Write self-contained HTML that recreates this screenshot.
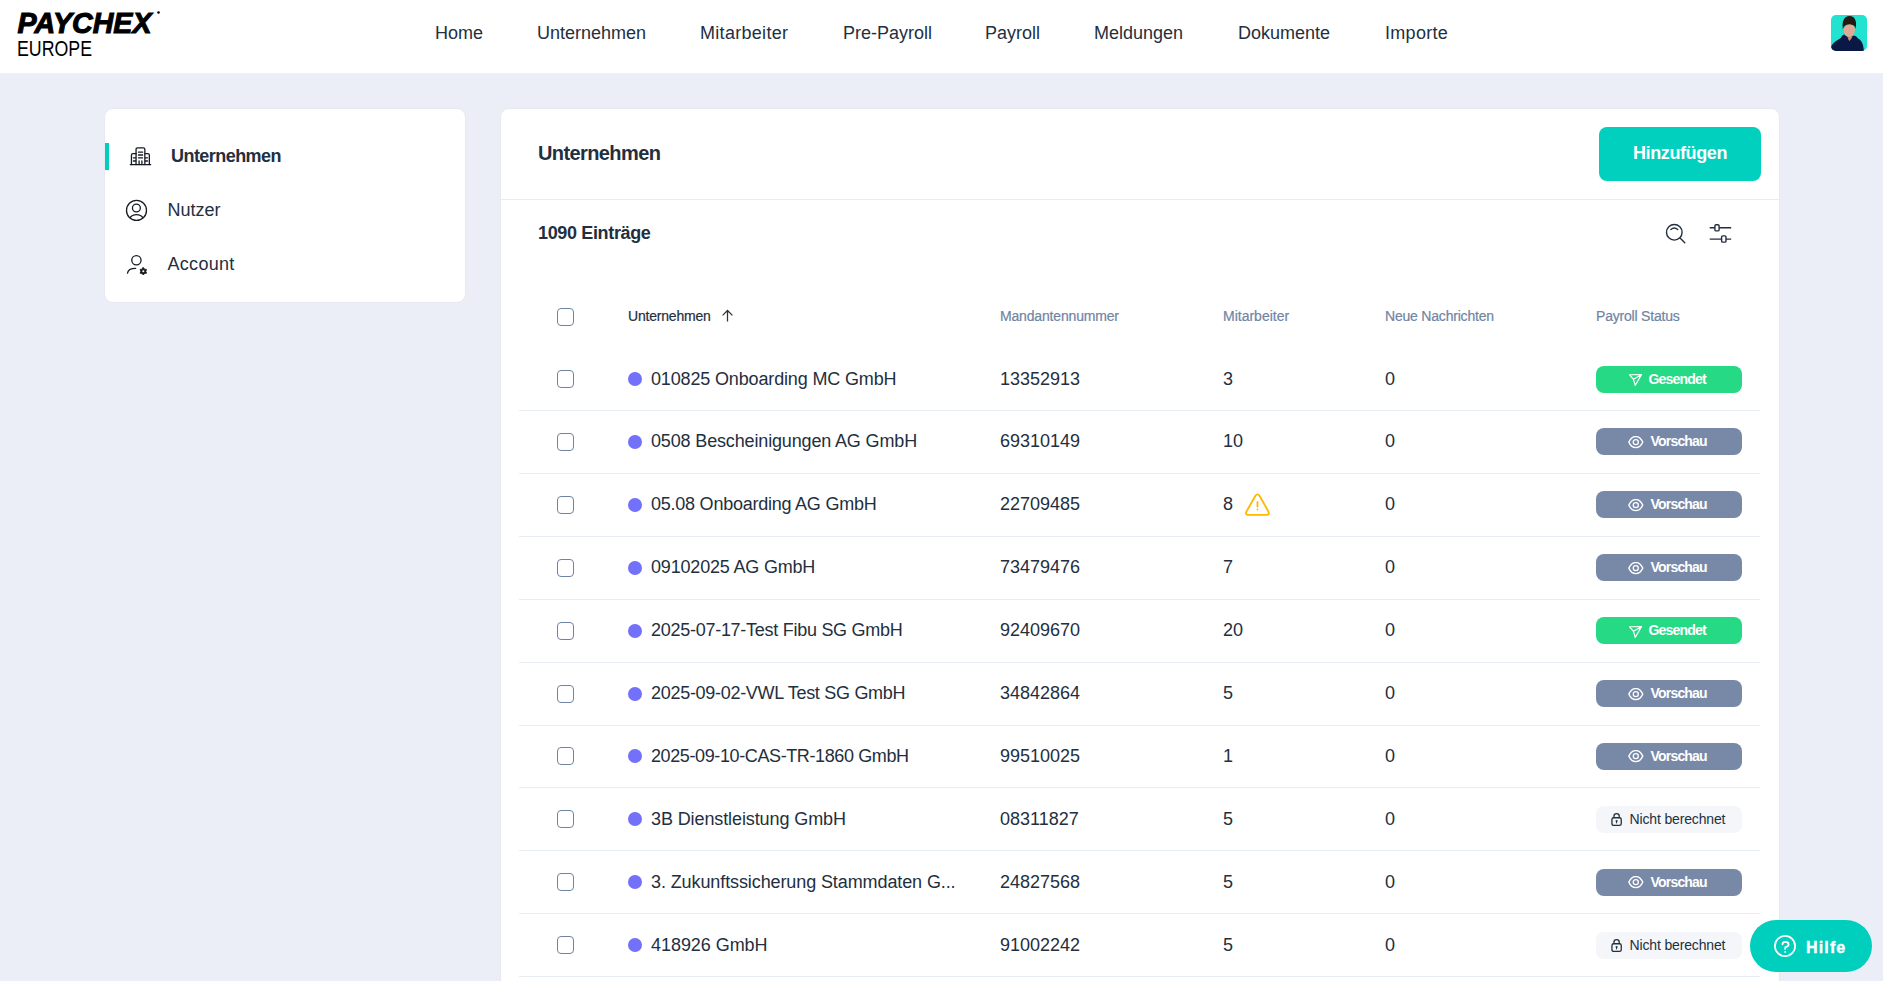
<!DOCTYPE html>
<html><head><meta charset="utf-8">
<style>
*{box-sizing:border-box;margin:0;padding:0}
html,body{width:1883px;height:981px;overflow:hidden}
body{background:#ebeef6;font-family:"Liberation Sans",sans-serif;color:#232f3e;position:relative}
.a{position:absolute;white-space:nowrap}
#hdr{position:absolute;left:0;top:0;width:1883px;height:73px;background:#fff}
.nav{position:absolute;top:23px;height:21px;line-height:21px;font-size:18px;color:#232f3e}
#side{position:absolute;left:104px;top:108px;width:362px;height:195px;background:#fff;border-radius:9px;border:1px solid #e6e9f0}
#main{position:absolute;left:500px;top:108px;width:1280px;height:900px;background:#fff;border-radius:9px;border:1px solid #e6e9f0}
.t18{font-size:18px;line-height:21px;height:21px}
.th{position:absolute;top:306px;font-size:14px;line-height:20px;color:#7084a3;-webkit-text-stroke:0.2px currentColor}
.cb{position:absolute;left:557px;width:17px;height:18px;border:1.5px solid #6f83a3;border-radius:4px;background:#fff}
.dot{position:absolute;left:628px;width:14px;height:14px;border-radius:50%;background:#7370fa}
.cell{position:absolute;font-size:18px;line-height:21px;height:21px;color:#232f3e;white-space:nowrap}
.div{position:absolute;left:519px;width:1241px;height:1px;background:#e8ecf3}
.badge{position:absolute;left:1596px;width:146px;height:27px;border-radius:8px;font-size:14px;line-height:27.5px;color:#fff;font-weight:bold;white-space:nowrap}
.g{background:#25d985}
.v{background:#7889a8}
.n{background:#f4f6fa;color:#232f3e;font-weight:normal}
</style></head><body>
<div id="hdr"></div>
<!-- logo -->
<svg class="a" style="left:0;top:0" width="200" height="73" viewBox="0 0 200 73">
  <text x="17.5" y="33.2" font-family="Liberation Sans" font-weight="bold" font-style="italic" font-size="30" textLength="134" lengthAdjust="spacingAndGlyphs" fill="#000" stroke="#000" stroke-width="1.1">PAYCHEX</text>
  <circle cx="158.5" cy="12.5" r="1.3" fill="#000"/>
  <text x="17" y="56" font-family="Liberation Sans" font-size="21.5" textLength="75" lengthAdjust="spacingAndGlyphs" fill="#000">EUROPE</text>
</svg>
<div class="nav" style="left:435px">Home</div>
<div class="nav" style="left:537px">Unternehmen</div>
<div class="nav" style="left:700px;letter-spacing:0.3px">Mitarbeiter</div>
<div class="nav" style="left:843px">Pre-Payroll</div>
<div class="nav" style="left:985px">Payroll</div>
<div class="nav" style="left:1094px">Meldungen</div>
<div class="nav" style="left:1238px">Dokumente</div>
<div class="nav" style="left:1385px;letter-spacing:0.3px">Importe</div>
<!-- avatar -->
<div class="a" style="left:1831px;top:15px;width:36px;height:36px;border-radius:5px;overflow:hidden;background:#22e3cf">
  <svg width="36" height="36" viewBox="0 0 36 36">
    <path d="M0 32 Q2 27 7.5 24.5 Q10 23.5 11 21 Q12.5 18.5 14.5 20 L22 20.5 Q25.5 20.5 26.5 23 Q30.5 25 32 30 L33 36 L0 36 Z" fill="#0a1845"/>
    <ellipse cx="18.3" cy="15.3" rx="5.6" ry="7" fill="#dcab95"/>
    <path d="M18.4 22 L16.5 22.5 Q17.5 25 18.5 26 Q20.5 24 21.5 21.5 Z" fill="#c98f78"/>
    <path d="M11.8 14.5 Q10.5 5.5 14.5 2.2 Q18.5 0 22.5 2.2 Q26 5 24.7 14 Q24 9.5 18.3 9.2 Q13 9.5 11.8 14.5Z" fill="#231a16"/>
  </svg>
</div>

<!-- sidebar -->
<div id="side"></div>
<div class="a" style="left:105px;top:143px;width:4px;height:27px;background:#00cfbd"></div>
<svg class="a" style="left:122px;top:140px" width="36" height="32" viewBox="0 0 36 32" fill="none" stroke="#161b22" stroke-width="1.3" stroke-linecap="round" stroke-linejoin="round">
  <path d="M14.05 24.6 V9.45 Q14.05 7.95 15.55 7.95 H21.35 Q22.85 7.95 22.85 9.45 V24.6"/>
  <path d="M9.45 24.6 V15.15 Q9.45 13.65 10.95 13.65 H14.05 M22.85 13.65 H25.85 Q27.35 13.65 27.35 15.15 V24.6"/>
  <path d="M8.3 24.6 H28.7"/>
  <path d="M16.5 12.2 H20.6 M16.5 15 H20.6 M16.5 17.8 H20.6 M11.4 17.8 H13.6 M11.4 21 H13.6 M23.3 17.8 H25.5 M23.3 21 H25.5 M17.1 21 V24.6 M19.9 21 V24.6"/>
</svg>
<div class="a t18" style="left:171px;top:146px;font-weight:bold;letter-spacing:-0.55px">Unternehmen</div>
<svg class="a" style="left:120px;top:194px" width="36" height="32" viewBox="0 0 36 32" fill="none" stroke="#161b22" stroke-width="1.3">
  <circle cx="16.5" cy="16.4" r="10"/><circle cx="16.4" cy="14" r="3.95"/><path d="M9.9 24 Q12 20.6 16.5 20.6 Q21 20.6 23.1 24"/>
</svg>
<div class="a t18" style="left:167.5px;top:200px">Nutzer</div>
<svg class="a" style="left:120px;top:248px" width="36" height="32" viewBox="0 0 36 32" fill="none" stroke="#161b22" stroke-width="1.3" stroke-linecap="round">
  <circle cx="16.4" cy="12.3" r="4.65"/><path d="M7.5 25.2 Q8.2 20.4 15.6 20.4"/>
  <path d="M23.30 19.60 L24.55 21.13 L26.50 21.45 L25.80 23.30 L26.50 25.15 L24.55 25.47 L23.30 27.00 L22.05 25.47 L20.10 25.15 L20.80 23.30 L20.10 21.45 L22.05 21.13Z" fill="#161b22" stroke-width="0.9" stroke-linejoin="round"/><circle cx="23.3" cy="23.3" r="1.05" fill="#fff" stroke="none"/>
</svg>
<div class="a t18" style="left:167.5px;top:254px;letter-spacing:0.3px">Account</div>

<!-- main card -->
<div id="main"></div>
<div class="a" style="left:538px;top:141px;font-size:20px;line-height:24px;font-weight:bold;letter-spacing:-0.6px">Unternehmen</div>
<div class="a" style="left:1599px;top:127px;width:162px;height:54px;border-radius:8px;background:#00d0bd;color:#fff;font-weight:bold;font-size:18px;line-height:52px;text-align:center;letter-spacing:-0.4px">Hinzufügen</div>
<div class="a" style="left:501px;top:199px;width:1278px;height:1px;background:#e8ecf3"></div>
<div class="a t18" style="left:538px;top:222.5px;font-weight:bold;letter-spacing:-0.35px">1090 Einträge</div>
<svg class="a" style="left:1662px;top:220px" width="28" height="28" viewBox="0 0 28 28" fill="none" stroke="#232f3e" stroke-width="1.4" stroke-linecap="round">
  <circle cx="12.3" cy="12.3" r="7.8"/><path d="M18 17.9 L22.8 22.7"/><path d="M8.9 9.6 Q12.3 6.4 15.7 9.6"/>
</svg>
<svg class="a" style="left:1707px;top:220px" width="28" height="28" viewBox="0 0 28 28" fill="none" stroke="#232f3e" stroke-width="1.4">
  <path d="M2.7 7.8 H7.9 M12.1 7.8 H24.2 M2.7 19.1 H14.6 M19 19.1 H24.2"/>
  <rect x="7.9" y="4.7" width="4.2" height="6.2" rx="1.2"/><rect x="14.6" y="15.9" width="4.4" height="6.2" rx="1.2"/>
</svg>
<!-- table header -->
<div class="cb" style="top:308px"></div>
<div class="th" style="left:628px;color:#232f3e;letter-spacing:-0.2px">Unternehmen</div>
<svg class="a" style="left:719px;top:307px" width="16" height="18" viewBox="0 0 16 18" fill="none" stroke="#333" stroke-width="1.25">
  <path d="M8.5 14.5 V3.6 M3.6 8.4 L8.5 3.5 L13.4 8.4"/>
</svg>
<div class="th" style="left:1000px;letter-spacing:-0.17px">Mandantennummer</div>
<div class="th" style="left:1223px">Mitarbeiter</div>
<div class="th" style="left:1385px;letter-spacing:-0.2px">Neue Nachrichten</div>
<div class="th" style="left:1596px;letter-spacing:-0.2px">Payroll Status</div>

<div class="cb" style="top:370.00px"></div>
<div class="dot" style="top:372.00px"></div>
<div class="cell" style="left:651px;top:368.50px;letter-spacing:-0.150px">010825 Onboarding MC GmbH</div>
<div class="cell" style="left:1000px;top:368.50px">13352913</div>
<div class="cell" style="left:1223px;top:368.50px">3</div>
<div class="cell" style="left:1385px;top:368.50px">0</div>
<div class="badge g" style="top:365.50px"><svg width="15" height="14" viewBox="0 0 15 14" fill="none" stroke="#fff" stroke-width="1.15" stroke-linejoin="round" stroke-linecap="round" style="position:absolute;left:32px;top:7.5px"><path d="M1.5 1.75 L13.6 1.5 L7.2 12.4 L5.5 6.3 Z M5.5 6.3 L13.4 1.8"/></svg><span style="position:absolute;left:52.5px;letter-spacing:-0.8px">Gesendet</span></div>
<div class="div" style="top:410.00px"></div>
<div class="cb" style="top:432.90px"></div>
<div class="dot" style="top:434.90px"></div>
<div class="cell" style="left:651px;top:431.40px;letter-spacing:-0.150px">0508 Bescheinigungen AG GmbH</div>
<div class="cell" style="left:1000px;top:431.40px">69310149</div>
<div class="cell" style="left:1223px;top:431.40px">10</div>
<div class="cell" style="left:1385px;top:431.40px">0</div>
<div class="badge v" style="top:428.40px"><svg width="16" height="13" viewBox="0 0 16 13" fill="none" stroke="#fff" stroke-width="1.3" stroke-linejoin="round" style="position:absolute;left:32px;top:7.5px"><path d="M0.8 6.1 C4.3 -1.3 11.3 -1.3 14.8 6.1 C11.3 13.5 4.3 13.5 0.8 6.1 Z"/><circle cx="7.8" cy="6.1" r="2.55"/></svg><span style="position:absolute;left:54.5px;letter-spacing:-0.8px">Vorschau</span></div>
<div class="div" style="top:472.90px"></div>
<div class="cb" style="top:495.80px"></div>
<div class="dot" style="top:497.80px"></div>
<div class="cell" style="left:651px;top:494.30px;letter-spacing:-0.237px">05.08 Onboarding AG GmbH</div>
<div class="cell" style="left:1000px;top:494.30px">22709485</div>
<div class="cell" style="left:1223px;top:494.30px">8</div>
<div class="cell" style="left:1385px;top:494.30px">0</div>
<svg class="a" style="left:1244px;top:491.80px" width="27" height="25" viewBox="0 0 27 25" fill="none" stroke="#ffb800" stroke-width="1.8" stroke-linecap="round" stroke-linejoin="round"><path d="M11.4 3.8 Q13.45 1.1 15.5 3.8 L24.4 19.5 Q26 22.9 22.5 22.9 H4.4 Q0.9 22.9 2.5 19.5 Z"/><path d="M13.45 9.9 V14.5"/><path d="M13.45 17.5 V17.6"/></svg>
<div class="badge v" style="top:491.30px"><svg width="16" height="13" viewBox="0 0 16 13" fill="none" stroke="#fff" stroke-width="1.3" stroke-linejoin="round" style="position:absolute;left:32px;top:7.5px"><path d="M0.8 6.1 C4.3 -1.3 11.3 -1.3 14.8 6.1 C11.3 13.5 4.3 13.5 0.8 6.1 Z"/><circle cx="7.8" cy="6.1" r="2.55"/></svg><span style="position:absolute;left:54.5px;letter-spacing:-0.8px">Vorschau</span></div>
<div class="div" style="top:535.80px"></div>
<div class="cb" style="top:558.70px"></div>
<div class="dot" style="top:560.70px"></div>
<div class="cell" style="left:651px;top:557.20px;letter-spacing:-0.183px">09102025 AG GmbH</div>
<div class="cell" style="left:1000px;top:557.20px">73479476</div>
<div class="cell" style="left:1223px;top:557.20px">7</div>
<div class="cell" style="left:1385px;top:557.20px">0</div>
<div class="badge v" style="top:554.20px"><svg width="16" height="13" viewBox="0 0 16 13" fill="none" stroke="#fff" stroke-width="1.3" stroke-linejoin="round" style="position:absolute;left:32px;top:7.5px"><path d="M0.8 6.1 C4.3 -1.3 11.3 -1.3 14.8 6.1 C11.3 13.5 4.3 13.5 0.8 6.1 Z"/><circle cx="7.8" cy="6.1" r="2.55"/></svg><span style="position:absolute;left:54.5px;letter-spacing:-0.8px">Vorschau</span></div>
<div class="div" style="top:598.70px"></div>
<div class="cb" style="top:621.60px"></div>
<div class="dot" style="top:623.60px"></div>
<div class="cell" style="left:651px;top:620.10px;letter-spacing:-0.272px">2025-07-17-Test Fibu SG GmbH</div>
<div class="cell" style="left:1000px;top:620.10px">92409670</div>
<div class="cell" style="left:1223px;top:620.10px">20</div>
<div class="cell" style="left:1385px;top:620.10px">0</div>
<div class="badge g" style="top:617.10px"><svg width="15" height="14" viewBox="0 0 15 14" fill="none" stroke="#fff" stroke-width="1.15" stroke-linejoin="round" stroke-linecap="round" style="position:absolute;left:32px;top:7.5px"><path d="M1.5 1.75 L13.6 1.5 L7.2 12.4 L5.5 6.3 Z M5.5 6.3 L13.4 1.8"/></svg><span style="position:absolute;left:52.5px;letter-spacing:-0.8px">Gesendet</span></div>
<div class="div" style="top:661.60px"></div>
<div class="cb" style="top:684.50px"></div>
<div class="dot" style="top:686.50px"></div>
<div class="cell" style="left:651px;top:683.00px;letter-spacing:-0.292px">2025-09-02-VWL Test SG GmbH</div>
<div class="cell" style="left:1000px;top:683.00px">34842864</div>
<div class="cell" style="left:1223px;top:683.00px">5</div>
<div class="cell" style="left:1385px;top:683.00px">0</div>
<div class="badge v" style="top:680.00px"><svg width="16" height="13" viewBox="0 0 16 13" fill="none" stroke="#fff" stroke-width="1.3" stroke-linejoin="round" style="position:absolute;left:32px;top:7.5px"><path d="M0.8 6.1 C4.3 -1.3 11.3 -1.3 14.8 6.1 C11.3 13.5 4.3 13.5 0.8 6.1 Z"/><circle cx="7.8" cy="6.1" r="2.55"/></svg><span style="position:absolute;left:54.5px;letter-spacing:-0.8px">Vorschau</span></div>
<div class="div" style="top:724.50px"></div>
<div class="cb" style="top:747.40px"></div>
<div class="dot" style="top:749.40px"></div>
<div class="cell" style="left:651px;top:745.90px;letter-spacing:-0.388px">2025-09-10-CAS-TR-1860 GmbH</div>
<div class="cell" style="left:1000px;top:745.90px">99510025</div>
<div class="cell" style="left:1223px;top:745.90px">1</div>
<div class="cell" style="left:1385px;top:745.90px">0</div>
<div class="badge v" style="top:742.90px"><svg width="16" height="13" viewBox="0 0 16 13" fill="none" stroke="#fff" stroke-width="1.3" stroke-linejoin="round" style="position:absolute;left:32px;top:7.5px"><path d="M0.8 6.1 C4.3 -1.3 11.3 -1.3 14.8 6.1 C11.3 13.5 4.3 13.5 0.8 6.1 Z"/><circle cx="7.8" cy="6.1" r="2.55"/></svg><span style="position:absolute;left:54.5px;letter-spacing:-0.8px">Vorschau</span></div>
<div class="div" style="top:787.40px"></div>
<div class="cb" style="top:810.30px"></div>
<div class="dot" style="top:812.30px"></div>
<div class="cell" style="left:651px;top:808.80px;letter-spacing:-0.102px">3B Dienstleistung GmbH</div>
<div class="cell" style="left:1000px;top:808.80px">08311827</div>
<div class="cell" style="left:1223px;top:808.80px">5</div>
<div class="cell" style="left:1385px;top:808.80px">0</div>
<div class="badge n" style="top:805.80px"><svg width="14" height="16" viewBox="0 0 14 16" fill="none" stroke="#232f3e" stroke-width="1.3" style="position:absolute;left:14px;top:6px"><rect x="1.95" y="5.75" width="9.3" height="7.7" rx="1.8"/><path d="M3.95 5.75 V4.3 Q3.95 1.65 6.6 1.65 Q9.25 1.65 9.25 4.3 V5.75"/><path d="M5.5 8.6 Q6.6 7.3 7.7 8.6 L6.6 12 Z" fill="#232f3e" stroke="none"/></svg><span style="position:absolute;left:33.5px;letter-spacing:-0.15px">Nicht berechnet</span></div>
<div class="div" style="top:850.30px"></div>
<div class="cb" style="top:873.20px"></div>
<div class="dot" style="top:875.20px"></div>
<div class="cell" style="left:651px;top:871.70px;letter-spacing:-0.101px">3. Zukunftssicherung Stammdaten G...</div>
<div class="cell" style="left:1000px;top:871.70px">24827568</div>
<div class="cell" style="left:1223px;top:871.70px">5</div>
<div class="cell" style="left:1385px;top:871.70px">0</div>
<div class="badge v" style="top:868.70px"><svg width="16" height="13" viewBox="0 0 16 13" fill="none" stroke="#fff" stroke-width="1.3" stroke-linejoin="round" style="position:absolute;left:32px;top:7.5px"><path d="M0.8 6.1 C4.3 -1.3 11.3 -1.3 14.8 6.1 C11.3 13.5 4.3 13.5 0.8 6.1 Z"/><circle cx="7.8" cy="6.1" r="2.55"/></svg><span style="position:absolute;left:54.5px;letter-spacing:-0.8px">Vorschau</span></div>
<div class="div" style="top:913.20px"></div>
<div class="cb" style="top:936.10px"></div>
<div class="dot" style="top:938.10px"></div>
<div class="cell" style="left:651px;top:934.60px;letter-spacing:-0.050px">418926 GmbH</div>
<div class="cell" style="left:1000px;top:934.60px">91002242</div>
<div class="cell" style="left:1223px;top:934.60px">5</div>
<div class="cell" style="left:1385px;top:934.60px">0</div>
<div class="badge n" style="top:931.60px"><svg width="14" height="16" viewBox="0 0 14 16" fill="none" stroke="#232f3e" stroke-width="1.3" style="position:absolute;left:14px;top:6px"><rect x="1.95" y="5.75" width="9.3" height="7.7" rx="1.8"/><path d="M3.95 5.75 V4.3 Q3.95 1.65 6.6 1.65 Q9.25 1.65 9.25 4.3 V5.75"/><path d="M5.5 8.6 Q6.6 7.3 7.7 8.6 L6.6 12 Z" fill="#232f3e" stroke="none"/></svg><span style="position:absolute;left:33.5px;letter-spacing:-0.15px">Nicht berechnet</span></div>
<div class="div" style="top:976.10px"></div>
<div class="a" style="left:1750px;top:920px;width:122px;height:52px;border-radius:26px;background:#00cfbd;color:#fff;font-weight:bold;font-size:16px;line-height:52px"><svg width="24" height="24" viewBox="0 0 24 24" fill="none" stroke="#fff" stroke-width="1.75" stroke-linecap="round" style="position:absolute;left:23px;top:14px"><circle cx="12" cy="12" r="10.1"/><path d="M9.5 10.3 Q9.6 7.9 12.2 7.9 Q15.6 7.9 15.6 10.4 Q15.6 12.2 12.2 13.3 V14.9"/><circle cx="12.2" cy="17.9" r="0.95" fill="#fff" stroke="none"/></svg><span style="position:absolute;left:56px;top:1.7px;letter-spacing:1.15px;-webkit-text-stroke:0.35px #fff">Hilfe</span></div>
</body></html>
